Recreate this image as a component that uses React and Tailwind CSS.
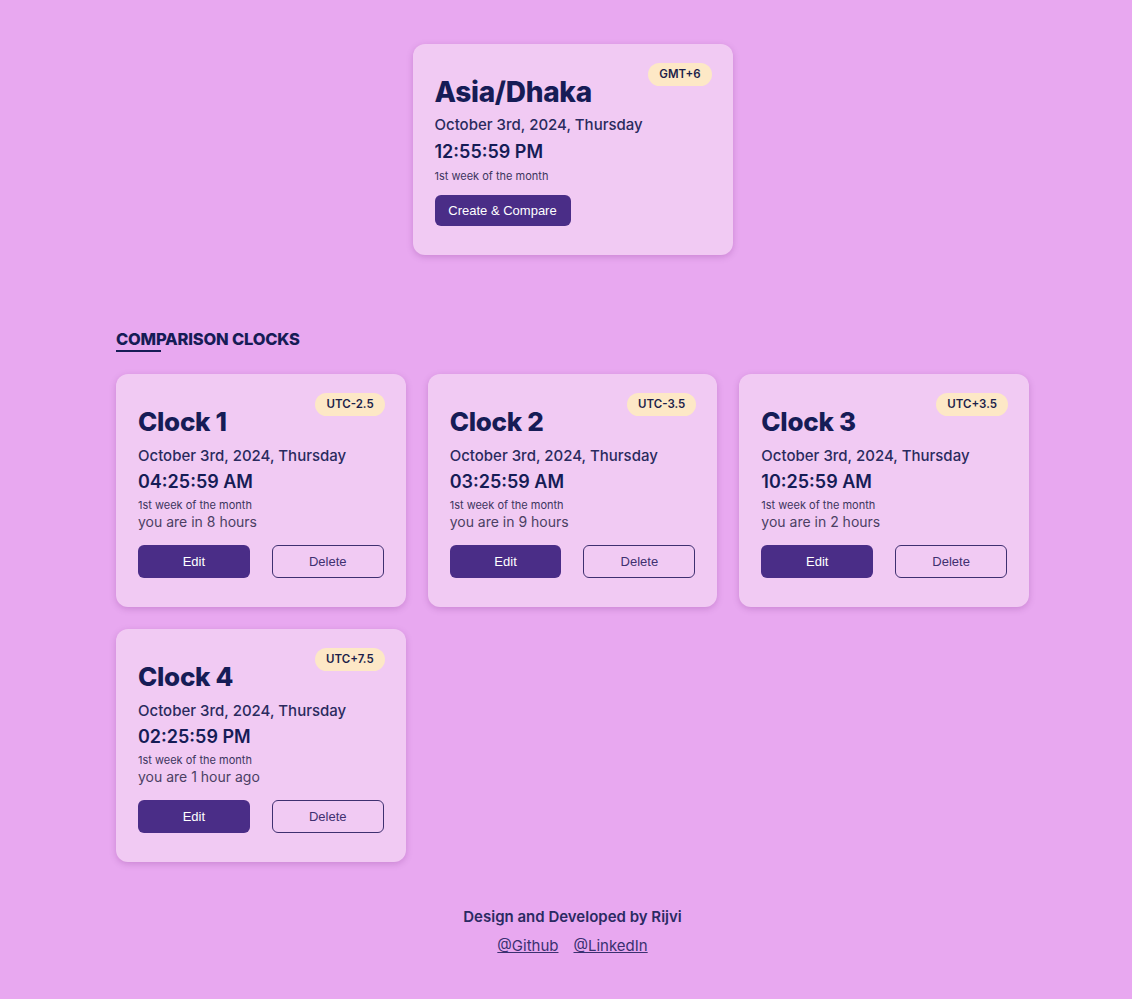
import React from 'react';

const clocks = [
  { name: 'Clock 1', offset: 'UTC-2.5', time: '04:25:59 AM', diff: 'you are in 8 hours' },
  { name: 'Clock 2', offset: 'UTC-3.5', time: '03:25:59 AM', diff: 'you are in 9 hours' },
  { name: 'Clock 3', offset: 'UTC+3.5', time: '10:25:59 AM', diff: 'you are in 2 hours' },
  { name: 'Clock 4', offset: 'UTC+7.5', time: '02:25:59 PM', diff: 'you are 1 hour ago' },
];

const font = { fontFamily: 'Inter, "Noto Sans", sans-serif' };

function Badge({ children }) {
  return (
    <span className="absolute right-[21px] top-[19px] rounded-full bg-[#fde8c6] px-[11px] py-[4px] text-[11.5px] font-semibold leading-[15px] text-[#1c1f4a]">
      {children}
    </span>
  );
}

function ClockCard({ clock }) {
  return (
    <div className="relative h-[233px] rounded-xl bg-[#f1caf3] px-[22px] pt-[29px] shadow-[0_2px_6px_rgba(120,40,130,0.25)]">
      <Badge>{clock.offset}</Badge>
      <h3 className="text-[26px] font-extrabold leading-[38px] tracking-[-0.3px] text-[#161c56]">{clock.name}</h3>
      <p className="mt-[4px] text-[15px] font-medium leading-[22px] text-[#2a2a5e]">October 3rd, 2024, Thursday</p>
      <p className="mt-[2px] text-[18px] font-semibold leading-[26px] text-[#161c56]">{clock.time}</p>
      <p className="mt-[3px] text-[11px] leading-[14px] text-[#3d3560]">1st week of the month</p>
      <p className="text-[14px] leading-[20px] text-[#4b3f63]">{clock.diff}</p>
      <div className="mt-[13px] grid grid-cols-2 gap-[22px]" style={{ fontFamily: '"Liberation Sans", Arial, sans-serif' }}>
        <button type="button" className="h-[33px] rounded-md bg-[#4a2d87] text-[13px] text-white">Edit</button>
        <button type="button" className="h-[33px] rounded-md border border-[#3f3070] text-[13px] text-[#3f3070]">Delete</button>
      </div>
    </div>
  );
}

export default function App() {
  return (
    <div className="min-h-[999px] bg-[#e8a8f0] pl-[13px]" style={font}>
      <div className="mx-auto w-[913px] pt-[44px] pb-[40px]">
        <div className="mx-auto relative h-[211px] w-[320px] rounded-xl bg-[#f1caf3] px-[22px] pt-[29px] shadow-[0_2px_6px_rgba(120,40,130,0.25)]">
          <Badge>GMT+6</Badge>
          <h1 className="text-[28px] font-extrabold leading-[38px] tracking-[-0.3px] text-[#161c56]">Asia/Dhaka</h1>
          <p className="mt-[3px] text-[15px] font-medium leading-[22px] text-[#2a2a5e]">October 3rd, 2024, Thursday</p>
          <p className="mt-[3px] text-[18px] font-semibold leading-[26px] text-[#161c56]">12:55:59 PM</p>
          <p className="mt-[4px] text-[11px] leading-[15px] text-[#3d3560]">1st week of the month</p>
          <button
            type="button"
            className="mt-[11px] h-[31px] w-[136px] rounded-md bg-[#4a2d87] text-[13px] text-white"
            style={{ fontFamily: '"Liberation Sans", Arial, sans-serif' }}
          >
            Create &amp; Compare
          </button>
        </div>

        <div className="mt-[74px]">
          <h2 className="text-[16.5px] font-extrabold leading-[20px] tracking-[-0.2px] text-[#161c56]">COMPARISON CLOCKS</h2>
          <div className="mt-[1px] h-[2px] w-[45px] bg-[#161c56]" />
        </div>

        <div className="mt-[22px] grid grid-cols-3 gap-[22px]">
          {clocks.map((c) => (
            <ClockCard key={c.name} clock={c} />
          ))}
        </div>

        <footer className="mt-[44px] flex flex-col items-center text-[15px] text-[#2a2a62]">
          <p className="font-semibold leading-[22px]">Design and Developed by Rijvi</p>
          <div className="mt-[7px] flex gap-[15px] leading-[22px] text-[#3a3070]">
            <a href="#" className="underline">@Github</a>
            <a href="#" className="underline">@LinkedIn</a>
          </div>
        </footer>
      </div>
    </div>
  );
}
